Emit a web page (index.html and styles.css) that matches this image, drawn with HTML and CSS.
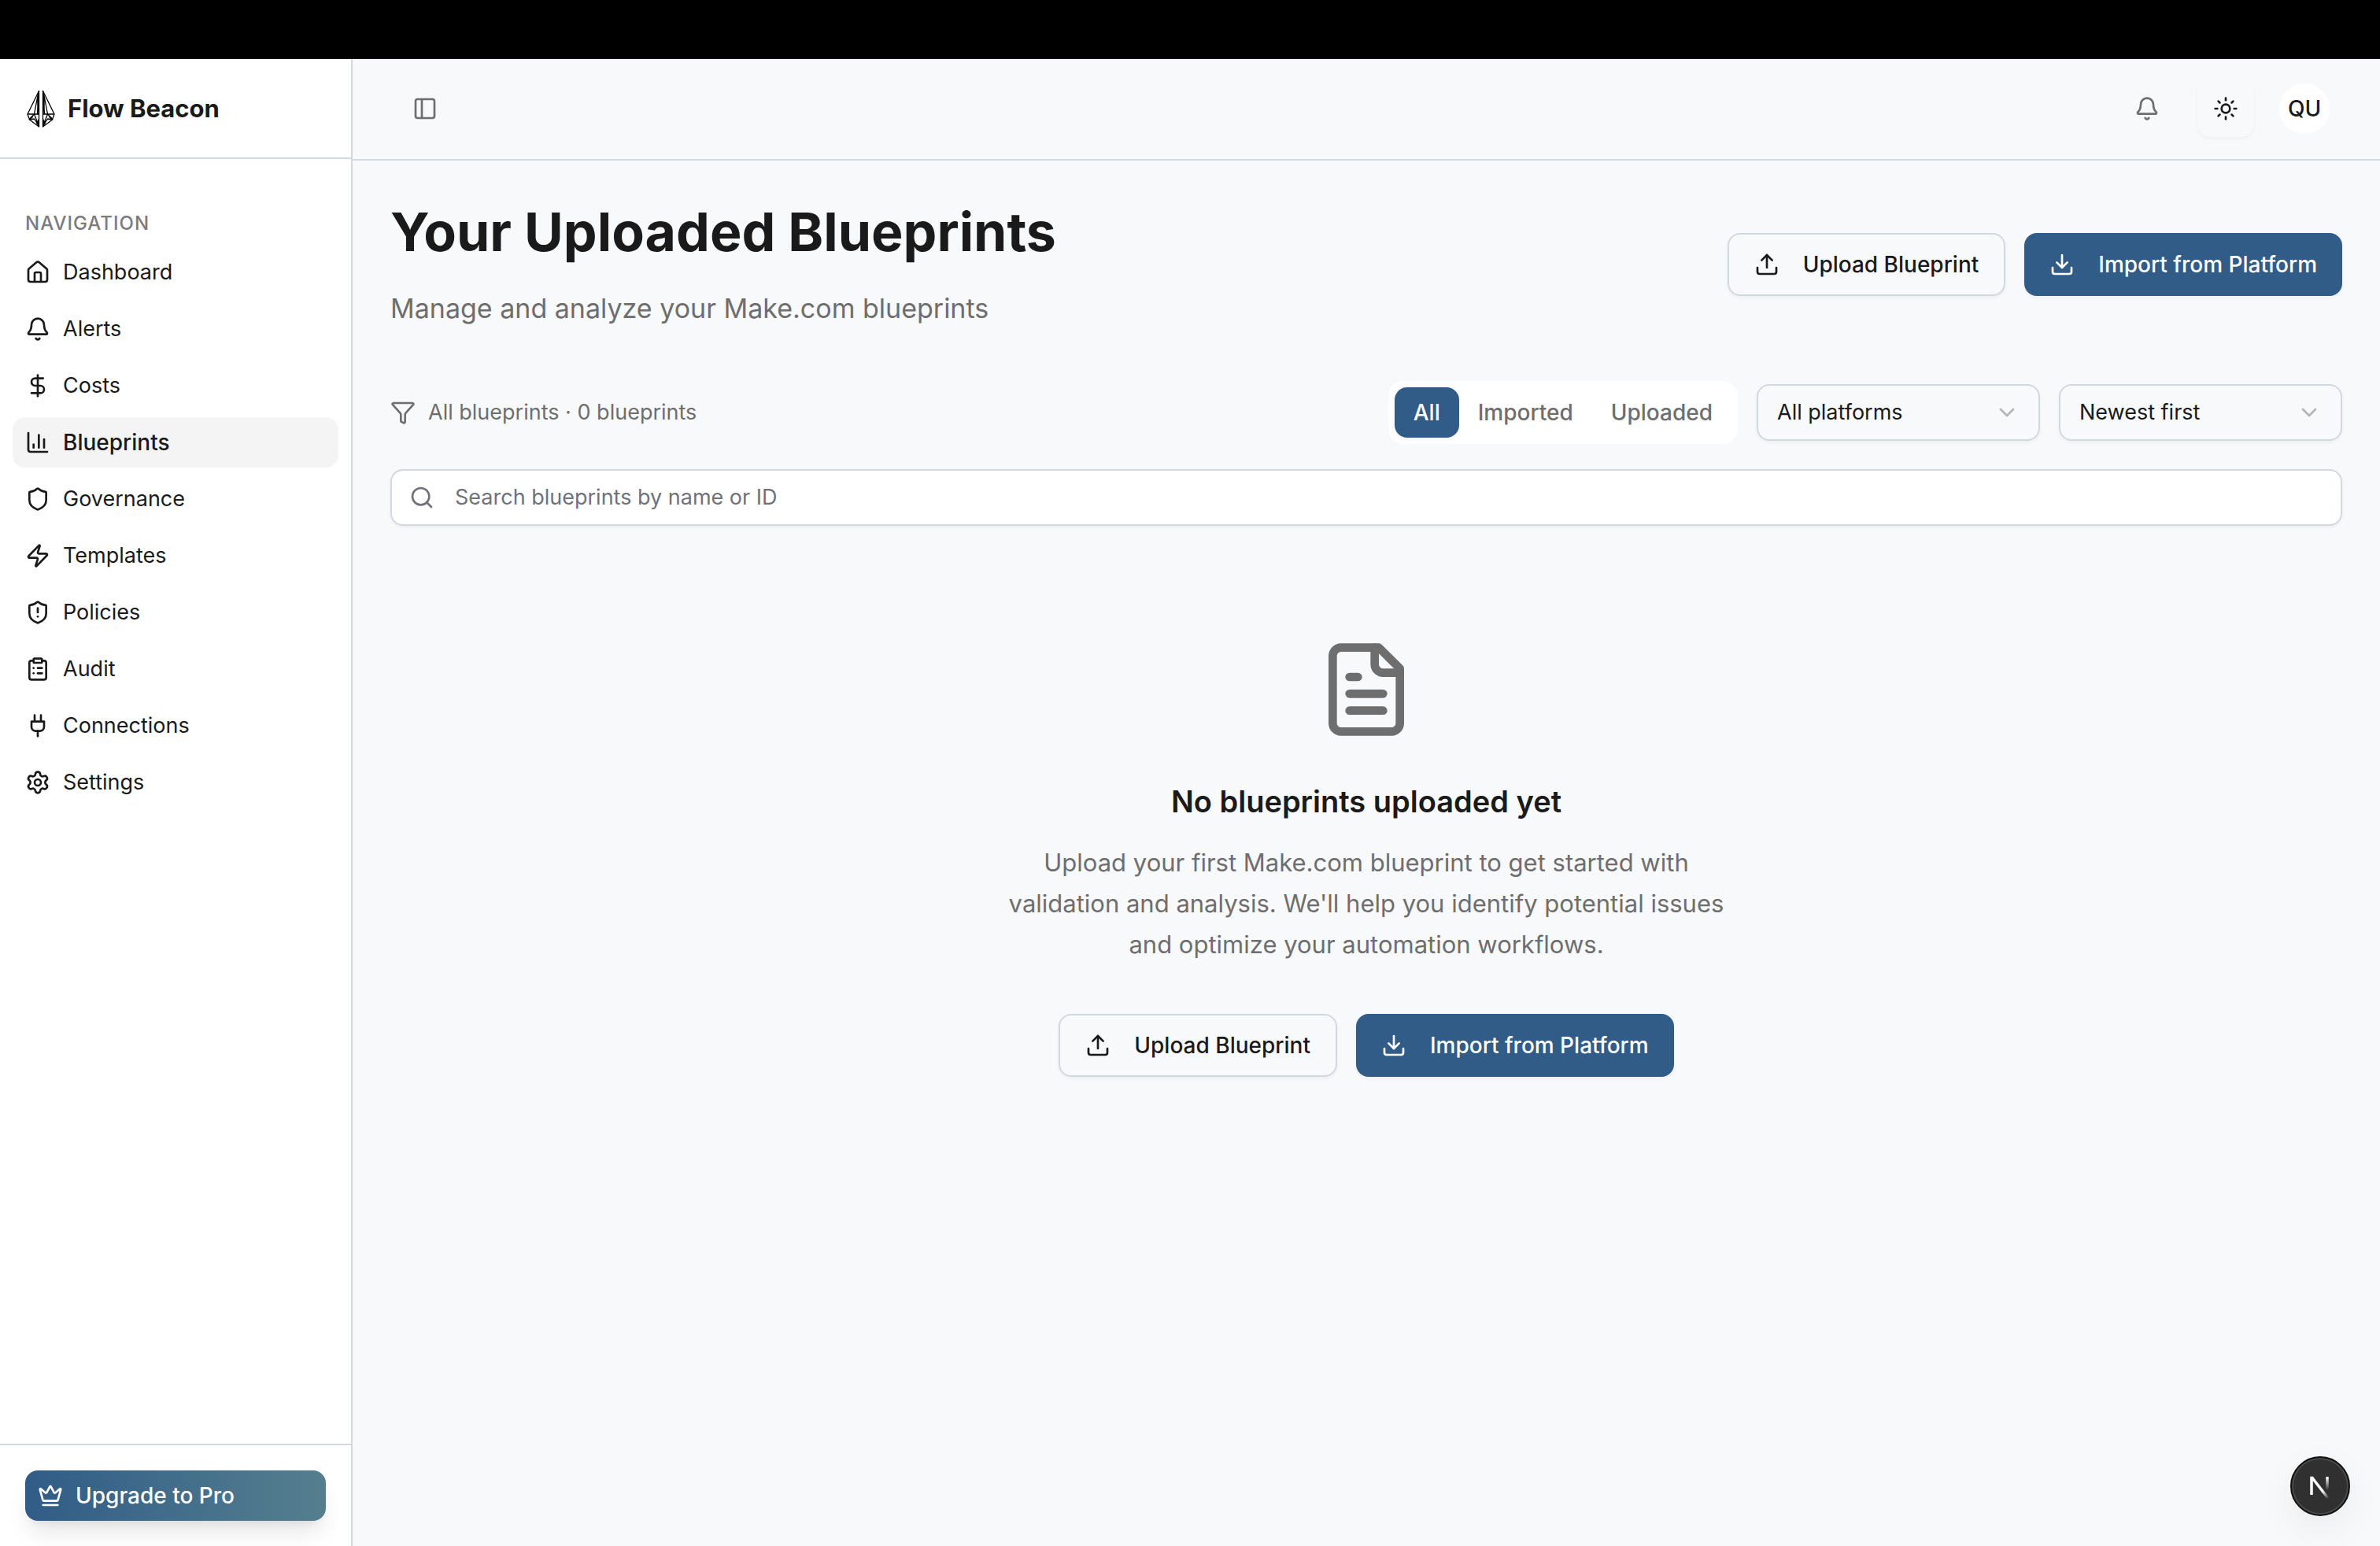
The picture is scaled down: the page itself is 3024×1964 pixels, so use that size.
FILE: index.html
```html
<!DOCTYPE html>
<html lang="en">
<head>
    <meta charset="UTF-8">
    <meta name="viewport" content="width=device-width, initial-scale=1.0">
    <title>Flow Beacon - Blueprints</title>
    <link rel="stylesheet" href="styles.css">
</head>
<body>
    <div class="top-strip"></div>
    <div class="app">
        <aside class="sidebar">
            <div class="brand">
                <svg class="brand-logo" viewBox="0 0 36 48">
                    <g fill="none" stroke="#000" stroke-width="1.300" stroke-linejoin="round">
                        <path d="M15.500 1.500 1 31l2.500 7 12 9z"/>
                        <path d="M1 31h14.500M15 2 9.500 31l6 15M9.500 31l-6 6M8 34l-4.500 4 6-1 6 9M15 4l-1.500 27"/>
                        <path d="M20.500 1.500 35 31l-2.500 7-12 9z"/>
                        <path d="M35 31H20.500M21 2l5.500 29-6 15M26.500 31l6 6M28 34l4.500 4-6-1-6 9M21 4l1.500 27"/>
                    </g>
                    <path d="M16 1v30h-1.500L13 12zM20 1v30h1.500L23 12zM16 47v-12l-4 8zM20 47v-12l4 8z"/>
                </svg>
                <span class="brand-name">Flow Beacon</span>
            </div>
            <nav class="nav">
                <h2 class="nav-title">NAVIGATION</h2>
                <a class="nav-item" href="#">
                    <svg class="icon" viewBox="0 0 24 24"><path d="M15 21v-8a1 1 0 0 0-1-1h-4a1 1 0 0 0-1 1v8"/><path d="M3 10a2 2 0 0 1 .709-1.528l7-5.999a2 2 0 0 1 2.582 0l7 5.999A2 2 0 0 1 21 10v9a2 2 0 0 1-2 2H5a2 2 0 0 1-2-2z"/></svg>
                    Dashboard
                </a>
                <a class="nav-item" href="#">
                    <svg class="icon" viewBox="0 0 24 24"><path d="M10.268 21a2 2 0 0 0 3.464 0"/><path d="M3.262 15.326A1 1 0 0 0 4 17h16a1 1 0 0 0 .74-1.673C19.410 13.956 18 12.499 18 8A6 6 0 0 0 6 8c0 4.499-1.411 5.956-2.738 7.326"/></svg>
                    Alerts
                </a>
                <a class="nav-item" href="#">
                    <svg class="icon" viewBox="0 0 24 24"><path d="M12 2v20"/><path d="M17 5H9.500a3.500 3.500 0 0 0 0 7h5a3.500 3.500 0 0 1 0 7H6"/></svg>
                    Costs
                </a>
                <a class="nav-item active" href="#">
                    <svg class="icon" viewBox="0 0 24 24"><path d="M3 3v16a2 2 0 0 0 2 2h16"/><path d="M18 17V9"/><path d="M13 17V5"/><path d="M8 17v-3"/></svg>
                    Blueprints
                </a>
                <a class="nav-item" href="#">
                    <svg class="icon" viewBox="0 0 24 24"><path d="M20 13c0 5-3.500 7.500-7.660 8.950a1 1 0 0 1-.67-.01C7.500 20.500 4 18 4 13V6a1 1 0 0 1 1-1c2 0 4.500-1.200 6.240-2.720a1.170 1.170 0 0 1 1.520 0C14.510 3.810 17 5 19 5a1 1 0 0 1 1 1z"/></svg>
                    Governance
                </a>
                <a class="nav-item" href="#">
                    <svg class="icon" viewBox="0 0 24 24"><path d="M4 14a1 1 0 0 1-.78-1.630l9.900-10.200a.5.5 0 0 1 .86.460l-1.920 6.020A1 1 0 0 0 13 10h7a1 1 0 0 1 .78 1.630l-9.900 10.200a.5.5 0 0 1-.86-.46l1.920-6.020A1 1 0 0 0 11 14z"/></svg>
                    Templates
                </a>
                <a class="nav-item" href="#">
                    <svg class="icon" viewBox="0 0 24 24"><path d="M20 13c0 5-3.500 7.500-7.660 8.950a1 1 0 0 1-.67-.01C7.500 20.500 4 18 4 13V6a1 1 0 0 1 1-1c2 0 4.500-1.200 6.240-2.720a1.170 1.170 0 0 1 1.520 0C14.510 3.810 17 5 19 5a1 1 0 0 1 1 1z"/><path d="M12 8v4"/><path d="M12 16h.01"/></svg>
                    Policies
                </a>
                <a class="nav-item" href="#">
                    <svg class="icon" viewBox="0 0 24 24"><rect width="8" height="4" x="8" y="2" rx="1"/><path d="M16 4h2a2 2 0 0 1 2 2v14a2 2 0 0 1-2 2H6a2 2 0 0 1-2-2V6a2 2 0 0 1 2-2h2"/><path d="M12 11h4"/><path d="M12 16h4"/><path d="M8 11h.01"/><path d="M8 16h.01"/></svg>
                    Audit
                </a>
                <a class="nav-item" href="#">
                    <svg class="icon" viewBox="0 0 24 24"><path d="M12 22v-5"/><path d="M9 8V2"/><path d="M15 8V2"/><path d="M18 8v5a4 4 0 0 1-4 4h-4a4 4 0 0 1-4-4V8Z"/></svg>
                    Connections
                </a>
                <a class="nav-item" href="#">
                    <svg class="icon" viewBox="0 0 24 24"><path d="M9.671 4.136a2.340 2.340 0 0 1 4.659 0 2.340 2.340 0 0 0 3.319 1.915 2.340 2.340 0 0 1 2.330 4.033 2.340 2.340 0 0 0 0 3.831 2.340 2.340 0 0 1-2.330 4.033 2.340 2.340 0 0 0-3.319 1.915 2.340 2.340 0 0 1-4.659 0 2.340 2.340 0 0 0-3.320-1.915 2.340 2.340 0 0 1-2.330-4.033 2.340 2.340 0 0 0 0-3.831A2.340 2.340 0 0 1 6.350 6.051a2.340 2.340 0 0 0 3.319-1.915"/><circle cx="12" cy="12" r="3"/></svg>
                    Settings
                </a>
            </nav>
            <div class="sidebar-footer">
                <button class="upgrade">
                    <svg class="icon" viewBox="0 0 24 24"><path d="M11.562 3.266a.5.5 0 0 1 .876 0L15.390 8.870a1 1 0 0 0 1.516.294L21.183 5.500a.5.5 0 0 1 .798.519l-2.834 10.246a1 1 0 0 1-.956.734H5.810a1 1 0 0 1-.957-.734L2.020 6.020a.5.5 0 0 1 .798-.519l4.276 3.664a1 1 0 0 0 1.516-.294z"/><path d="M5 21h14"/></svg>
                    Upgrade to Pro
                </button>
            </div>
        </aside>

        <div class="main">
            <header class="topbar">
                <button class="icon-button" aria-label="Toggle sidebar">
                    <svg class="icon" viewBox="0 0 24 24"><rect width="18" height="18" x="3" y="3" rx="2"/><path d="M9 3v18"/></svg>
                </button>
                <div class="topbar-right">
                    <button class="icon-button" aria-label="Notifications">
                        <svg class="icon" viewBox="0 0 24 24"><path d="M10.268 21a2 2 0 0 0 3.464 0"/><path d="M3.262 15.326A1 1 0 0 0 4 17h16a1 1 0 0 0 .74-1.673C19.410 13.956 18 12.499 18 8A6 6 0 0 0 6 8c0 4.499-1.411 5.956-2.738 7.326"/></svg>
                    </button>
                    <button class="theme-button" aria-label="Toggle theme">
                        <svg class="icon" viewBox="0 0 24 24"><circle cx="12" cy="12" r="4"/><path d="M12 2v2"/><path d="M12 20v2"/><path d="m4.930 4.930 1.410 1.410"/><path d="m17.660 17.660 1.410 1.410"/><path d="M2 12h2"/><path d="M20 12h2"/><path d="m6.340 17.660-1.410 1.410"/><path d="m19.070 4.930-1.410 1.410"/></svg>
                    </button>
                    <button class="avatar">QU</button>
                </div>
            </header>

            <main class="content">
                <section class="page-header">
                    <div class="page-heading">
                        <h1>Your Uploaded Blueprints</h1>
                        <p>Manage and analyze your Make.com blueprints</p>
                    </div>
                    <div class="actions">
                        <button class="btn btn-outline">
                            <svg class="icon" viewBox="0 0 24 24"><path d="M12 3v12"/><path d="m17 8-5-5-5 5"/><path d="M21 15v4a2 2 0 0 1-2 2H5a2 2 0 0 1-2-2v-4"/></svg>
                            Upload Blueprint
                        </button>
                        <button class="btn btn-primary">
                            <svg class="icon" viewBox="0 0 24 24"><path d="M12 15V3"/><path d="m7 10 5 5 5-5"/><path d="M21 15v4a2 2 0 0 1-2 2H5a2 2 0 0 1-2-2v-4"/></svg>
                            Import from Platform
                        </button>
                    </div>
                </section>

                <section class="filters">
                    <div class="summary">
                        <svg class="icon" viewBox="0 0 24 24"><path d="M10 20a1 1 0 0 0 .553.895l2 1A1 1 0 0 0 14 21v-7a2 2 0 0 1 .517-1.341L21.740 4.670A1 1 0 0 0 21 3H3a1 1 0 0 0-.742 1.670l7.225 7.989A2 2 0 0 1 10 14z"/></svg>
                        <span>All blueprints · 0 blueprints</span>
                    </div>
                    <div class="filter-controls">
                        <div class="tabs">
                            <button class="tab selected">All</button>
                            <button class="tab">Imported</button>
                            <button class="tab">Uploaded</button>
                        </div>
                        <div class="select-box">
                            <select aria-label="Platform">
                                <option>All platforms</option>
                            </select>
                            <svg class="icon chevron" viewBox="0 0 24 24"><path d="m6 9 6 6 6-6"/></svg>
                        </div>
                        <div class="select-box">
                            <select aria-label="Sort order">
                                <option>Newest first</option>
                            </select>
                            <svg class="icon chevron" viewBox="0 0 24 24"><path d="m6 9 6 6 6-6"/></svg>
                        </div>
                    </div>
                </section>

                <label class="search">
                    <svg class="icon" viewBox="0 0 24 24"><path d="m21 21-4.340-4.340"/><circle cx="11" cy="11" r="8"/></svg>
                    <input type="text" placeholder="Search blueprints by name or ID" aria-label="Search blueprints">
                </label>

                <section class="empty">
                    <svg class="empty-icon" viewBox="0 0 24 24"><path d="M15 2H6a2 2 0 0 0-2 2v16a2 2 0 0 0 2 2h12a2 2 0 0 0 2-2V7Z"/><path d="M14 2v4a2 2 0 0 0 2 2h4"/><path d="M10 9H8"/><path d="M16 13H8"/><path d="M16 17H8"/></svg>
                    <h2>No blueprints uploaded yet</h2>
                    <p>Upload your first Make.com blueprint to get started with validation and analysis. We'll help you identify potential issues and optimize your automation workflows.</p>
                    <div class="actions">
                        <button class="btn btn-outline">
                            <svg class="icon" viewBox="0 0 24 24"><path d="M12 3v12"/><path d="m17 8-5-5-5 5"/><path d="M21 15v4a2 2 0 0 1-2 2H5a2 2 0 0 1-2-2v-4"/></svg>
                            Upload Blueprint
                        </button>
                        <button class="btn btn-primary">
                            <svg class="icon" viewBox="0 0 24 24"><path d="M12 15V3"/><path d="m7 10 5 5 5-5"/><path d="M21 15v4a2 2 0 0 1-2 2H5a2 2 0 0 1-2-2v-4"/></svg>
                            Import from Platform
                        </button>
                    </div>
                </section>
            </main>
        </div>
    </div>

    <button class="dev-badge" aria-label="Open dev tools">
        <svg viewBox="0 0 40 40">
            <defs>
                <linearGradient id="fadeDiagonal" gradientUnits="userSpaceOnUse" x1="18" y1="20" x2="30" y2="36">
                    <stop offset="0.4" stop-color="#fff"/>
                    <stop offset="1" stop-color="#fff" stop-opacity="0"/>
                </linearGradient>
                <linearGradient id="fadeBar" gradientUnits="userSpaceOnUse" x1="29" y1="9" x2="29" y2="25">
                    <stop offset="0" stop-color="#fff"/>
                    <stop offset="1" stop-color="#fff" stop-opacity="0"/>
                </linearGradient>
            </defs>
            <path d="M9 31V9.500h1L30.500 36" fill="none" stroke="url(#fadeDiagonal)" stroke-width="3.500"/>
            <path d="M29 8v17" fill="none" stroke="url(#fadeBar)" stroke-width="3.500"/>
        </svg>
    </button>
</body>
</html>
```

FILE: styles.css
```css
* {
    box-sizing: border-box;
}
body {
    display: flex;
    flex-direction: column;
    min-height: 100vh;
    margin: 0;
    font-family: Inter, sans-serif;
    font-size: 27px;
    line-height: 40px;
    color: #1a1a1a;
    background-color: #f8f9fb;
}
h1, h2, p {
    margin: 0;
}
button, input, select {
    font: inherit;
    color: inherit;
}
button {
    padding: 0;
    border: none;
    background: none;
    cursor: pointer;
}
.icon {
    flex-shrink: 0;
    width: 32px;
    height: 32px;
    fill: none;
    stroke: currentColor;
    stroke-width: 2;
    stroke-linecap: round;
    stroke-linejoin: round;
}
.top-strip {
    height: 75px;
    background-color: #000;
}
.app {
    display: flex;
    flex: 1;
}

/* sidebar */
.sidebar {
    display: flex;
    flex-direction: column;
    flex-shrink: 0;
    width: 448px;
    border-right: 2px solid #d3d8e0;
    background-color: #fff;
}
.brand {
    display: flex;
    align-items: center;
    gap: 16px;
    height: 127px;
    padding: 0 34px;
    border-bottom: 2px solid #d3d8e0;
}
.brand-logo {
    width: 36px;
    height: 48px;
}
.brand-name {
    font-size: 31px;
    font-weight: 700;
}
.nav {
    display: flex;
    flex-direction: column;
    flex: 1;
    gap: 8px;
    padding: 58px 16px;
}
.nav-title {
    padding: 4px 16px 2px;
    font-size: 24px;
    font-weight: 500;
    letter-spacing: 1px;
    color: #7b7b80;
}
.nav-item {
    display: flex;
    align-items: center;
    gap: 16px;
    height: 64px;
    padding: 0 16px;
    border-radius: 16px;
    color: inherit;
    text-decoration: none;
}
.nav-item.active {
    font-size: 28px;
    font-weight: 500;
    background-color: #f4f4f5;
}
.sidebar-footer {
    padding: 32px;
    border-top: 2px solid #d3d8e0;
}
.upgrade {
    display: flex;
    align-items: center;
    gap: 16px;
    width: 100%;
    height: 64px;
    padding: 0 16px;
    border-radius: 16px;
    font-size: 28px;
    font-weight: 500;
    color: #fff;
    background: linear-gradient(to right, #305c87, #557f8e);
    box-shadow: 0 20px 30px -6px rgba(0, 0, 0, 0.1), 0 8px 12px -8px rgba(0, 0, 0, 0.1);
}

/* main column */
.main {
    display: flex;
    flex-direction: column;
    flex: 1;
    min-width: 0;
}
.topbar {
    display: flex;
    align-items: center;
    justify-content: space-between;
    height: 129px;
    padding: 0 64px 2px;
    border-bottom: 2px solid #d3d8e0;
}
.topbar-right {
    display: flex;
    align-items: center;
    gap: 32px;
}
.icon-button, .theme-button, .avatar {
    display: flex;
    align-items: center;
    justify-content: center;
    width: 64px;
    height: 64px;
    color: #6e6e6e;
}
.topbar > .icon-button {
    width: 56px;
}
.theme-button {
    width: 72px;
    height: 72px;
    border-radius: 16px;
    color: #1a1a1a;
    box-shadow: 0 2px 4px rgba(0, 0, 0, 0.05);
}
.avatar {
    border-radius: 50%;
    font-size: 28px;
    font-weight: 500;
    color: #1a1a1a;
    background-color: #fff;
}
.content {
    display: flex;
    flex-direction: column;
    padding: 48px;
}
.page-header {
    display: flex;
    align-items: center;
    justify-content: space-between;
    margin-bottom: 64px;
}
.page-heading h1 {
    margin-bottom: 28px;
    font-size: 68px;
    font-weight: 700;
    line-height: 84px;
}
.page-heading p {
    font-size: 34px;
    line-height: 56px;
    color: #6e6e6e;
}
.actions {
    display: flex;
    gap: 24px;
}
.btn {
    display: flex;
    align-items: center;
    gap: 30px;
    height: 80px;
    padding: 0 32px;
    border-radius: 16px;
    font-size: 28px;
    font-weight: 500;
    white-space: nowrap;
    box-shadow: 0 2px 4px rgba(0, 0, 0, 0.05);
}
.btn-outline {
    border: 2px solid #d3d8e0;
}
.btn-primary {
    color: #fff;
    background-color: #305c87;
}

/* filters */
.filters {
    display: flex;
    align-items: center;
    justify-content: space-between;
    margin-bottom: 32px;
}
.summary {
    display: flex;
    align-items: center;
    gap: 16px;
    color: #6e6e6e;
}
.filter-controls {
    display: flex;
    align-items: center;
    gap: 24px;
}
.tabs {
    display: flex;
    padding: 8px;
    border-radius: 20px;
    background-color: #fff;
}
.tab {
    height: 64px;
    padding: 0 24px;
    border-radius: 16px;
    font-size: 28px;
    font-weight: 500;
    color: #6e6e6e;
}
.tab.selected {
    color: #fff;
    background-color: #305c87;
    box-shadow: 0 2px 4px rgba(0, 0, 0, 0.05);
}
.select-box {
    position: relative;
    width: 360px;
}
.select-box select {
    display: block;
    width: 100%;
    height: 72px;
    padding: 0 24px;
    border: 2px solid #d3d8e0;
    border-radius: 16px;
    background: none;
    appearance: none;
    box-shadow: 0 2px 4px rgba(0, 0, 0, 0.05);
}
.chevron {
    position: absolute;
    top: 20px;
    right: 26px;
    opacity: 0.3;
    pointer-events: none;
}
.search {
    display: flex;
    align-items: center;
    gap: 26px;
    height: 72px;
    padding: 0 22px;
    border: 2px solid #d3d8e0;
    border-radius: 16px;
    color: #71717a;
    background-color: #fff;
    box-shadow: 0 2px 4px rgba(0, 0, 0, 0.05);
}
.search input {
    flex: 1;
    padding: 0;
    border: none;
    outline: none;
    background: none;
}
.search input::placeholder {
    color: #71717a;
    opacity: 1;
}

/* empty state */
.empty {
    display: flex;
    flex-direction: column;
    align-items: center;
    padding-top: 144px;
    text-align: center;
}
.empty-icon {
    width: 128px;
    height: 128px;
    margin-bottom: 50px;
    fill: none;
    stroke: #6e6e6e;
    stroke-width: 2;
    stroke-linecap: round;
    stroke-linejoin: round;
}
.empty h2 {
    margin-bottom: 24px;
    font-size: 38px;
    font-weight: 600;
    line-height: 56px;
}
.empty p {
    max-width: 920px;
    margin-bottom: 62px;
    font-size: 31px;
    line-height: 52px;
    color: #6e6e6e;
}

/* floating dev badge */
.dev-badge {
    position: fixed;
    right: 38px;
    bottom: 38px;
    display: flex;
    align-items: center;
    justify-content: center;
    width: 76px;
    height: 76px;
    border: 2px solid #111;
    border-radius: 50%;
    background-color: #303030;
    box-shadow: inset 0 0 0 2px #4a4a4a, 0 16px 48px rgba(0, 0, 0, 0.06);
}
.dev-badge svg {
    width: 40px;
    height: 40px;
}
```
